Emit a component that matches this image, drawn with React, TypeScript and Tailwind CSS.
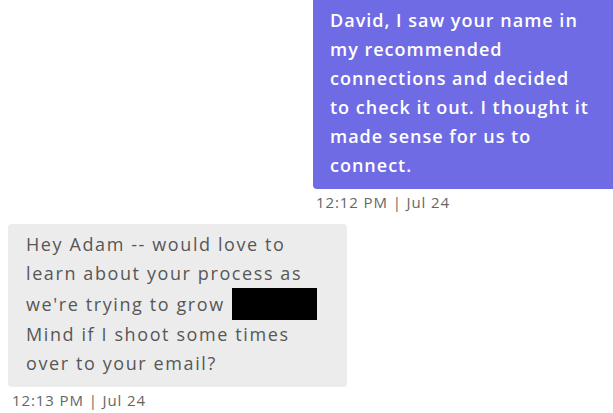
const sent = [
  'David, I saw your name in',
  'my recommended',
  'connections and decided',
  'to check it out. I thought it',
  'made sense for us to',
  'connect.',
];

export default function App() {
  return (
    <div
      className="w-[613px] h-[413px] overflow-hidden bg-white relative"
      style={{ fontFamily: '"Open Sans", "Liberation Sans", sans-serif' }}
    >
      <div className="flex flex-col items-end -mt-[1px]">
        <div className="w-[300px] bg-[#6e6be4] rounded-bl-[4px] pl-[17px] pt-[7px] pb-[9px] text-white font-semibold text-[18px] leading-[29px] tracking-[1px]">
          {sent.map((l) => (
            <div key={l} className="whitespace-nowrap">{l}</div>
          ))}
        </div>
        <div className="w-[300px] pl-[3px] pt-[3px] text-[#666666] font-medium text-[15px] leading-[20px] tracking-[0.9px]">
          12:12 PM | Jul 24
        </div>
      </div>

      <div className="flex flex-col items-start pl-[8px] mt-[12px]">
        <div className="w-[339px] bg-[#ececec] rounded-[4px] pl-[18px] pt-[6px] pb-[9px] text-[#575757] font-medium text-[18px] leading-[29px] tracking-[1.6px]">
          <div className="whitespace-nowrap">Hey Adam -- would love to</div>
          <div className="whitespace-nowrap">learn about your process as</div>
          <div className="whitespace-nowrap flex items-center">
            <span>we're trying to grow</span>
            <span className="inline-block w-[85px] h-[32px] bg-black ml-[7px]" />
          </div>
          <div className="whitespace-nowrap">Mind if I shoot some times</div>
          <div className="whitespace-nowrap">over to your email?</div>
        </div>
        <div className="pl-[4px] pt-[3px] text-[#666666] font-medium text-[15px] leading-[20px] tracking-[0.9px]">
          12:13 PM | Jul 24
        </div>
      </div>
    </div>
  );
}
